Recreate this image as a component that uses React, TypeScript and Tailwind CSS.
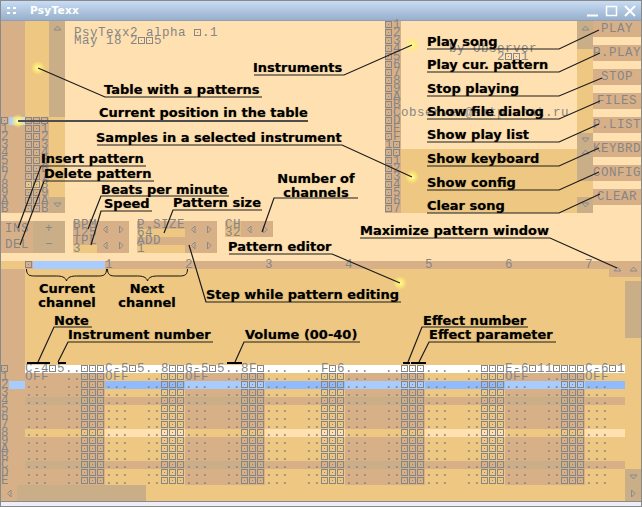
import React from 'react';

const MONO = "font-['Liberation_Mono',monospace] text-[12.5px] leading-[9px] tracking-[0.5px] text-[#868686] whitespace-pre";
// the tracker's zero is a box with a dot in it, the digit itself stays in the text
const ZERO = "w-[7px] h-[7px] mr-px shrink-0 box-border border border-[#868686] overflow-hidden text-[5px] leading-[5px] tracking-normal text-center text-transparent bg-[linear-gradient(#868686,#868686)] bg-[length:1px_1px] bg-center bg-no-repeat";
const NOTE = "absolute font-['DejaVu_Sans',sans-serif] font-bold text-[13px] leading-[14px] text-black whitespace-nowrap [text-shadow:0_0_1px_rgba(0,0,0,0.45)]";

function Txt({ children, className = '' }: { children: string; className?: string }) {
    return (
        <div className={`${MONO} h-2 flex ${className}`}>
            {children.split(/(0)/).filter(Boolean).map((part, i) =>
                part === '0'
                    ? <span key={i} className={ZERO}>0</span>
                    : <span key={i} className="shrink-0">{part}</span>
            )}
        </div>
    );
}

function Arrow({ dir, className = '' }: { dir: 'up' | 'down' | 'left' | 'right'; className?: string }) {
    const points = {
        up: '4.5,2 1,6 8,6',
        down: '1,2 8,2 4.5,6',
        left: '6,1 6,8 2.5,4.5',
        right: '2.5,1 2.5,8 6,4.5',
    }[dir];
    return (
        <svg width="9" height="9" viewBox="0 0 9 9" className={`shrink-0 ${className}`}>
            <polygon points={points} fill="none" stroke="#8a8a8a" strokeWidth="1" />
        </svg>
    );
}

const hexRows = '0123456789ABCDE'.split('');
const tableRows = '0123456789AB'.split('');
const instTop = ['01', '02', '03', '04', '05', '06', '07', '08', '09', '0A', '0B', '0C', '0D', '0E', '0F', '10'];
const instBottom = ['00', '01', '02', '03', '04', '05', '06', '07'];
const buttons = ['PLAY', 'P.PLAY', 'STOP', 'FILES', 'P.LIST', 'KEYBRD', 'CONFIG', 'CLEAR'];

const EMPTY = '...  ..000';
const channels = [
    { first: 'C-405..000', second: 'OFF  ..000', tan: true },
    { first: 'C-505..800', second: 'OFF  ..000', tan: false },
    { first: 'G-505..8F0', second: 'OFF  ..000', tan: true },
    { first: '...  ..F06', second: EMPTY, tan: false },
    { first: EMPTY, second: EMPTY, tan: true },
    { first: EMPTY, second: EMPTY, tan: false },
    { first: 'E-60110000', second: 'OFF  ..000', tan: true },
    { first: 'C-601', second: 'OFF', tan: false },
];

function rowBg(row: number, ch: number, tan: boolean) {
    if (row === 0) return 'bg-white';
    if (row === 2) {
        if (ch === 0) return 'bg-[#d8b088]';
        return tan ? 'bg-[#a8ccff]' : 'bg-[#90bcff]';
    }
    if (row === 4 || row === 12) return tan ? 'bg-[#c9ae88]' : 'bg-[#d8b088]';
    if (row === 8) return tan ? 'bg-[#eec882]' : 'bg-[#ffe0b0]';
    return tan ? 'bg-[#d8b088]' : 'bg-[#eec882]';
}

function TitleBar() {
    return (
        <div className="h-[21px] shrink-0 flex items-center border-t border-[#8a8a8a] border-b border-b-[#8f9fb4] bg-gradient-to-b from-[#c8dcf4] to-[#98b0cc]">
            <svg width="10" height="7" viewBox="0 0 10 7" className="ml-[6px]" fill="#fff">
                <rect x="0" y="0" width="3" height="2" />
                <rect x="6" y="0" width="3" height="2" />
                <rect x="0" y="5" width="3" height="2" />
                <rect x="6" y="5" width="3" height="2" />
            </svg>
            <span className="ml-[13px] font-['DejaVu_Sans',sans-serif] font-bold text-[10.5px] tracking-[0.3px] text-white">PsyTexx</span>
            <svg width="52" height="14" viewBox="0 0 52 14" className="ml-auto mr-[4px]" stroke="#fff" fill="none">
                <path d="M2 11.5h11" strokeWidth="2" />
                <rect x="21.5" y="2.5" width="10" height="9" strokeWidth="1.5" />
                <path d="M40 2l10 10M50 2L40 12" strokeWidth="2" />
            </svg>
        </div>
    );
}

function PatternTable() {
    return (
        <div className="w-16 flex shrink-0">
            <div className="w-6 bg-[#d8b088] pt-24">
                {tableRows.map((r, i) => (
                    <div key={r} className="flex h-2">
                        <Txt className="w-2">{r}</Txt>
                        {i === 0 && <div className="w-4 h-2 bg-gradient-to-r from-[#a8ccff] to-[#cfe0e0]" />}
                    </div>
                ))}
            </div>
            <div className="w-6 bg-[#eec882] pt-24">
                {tableRows.map((r, i) => (
                    <Txt key={r} className={i === 8 ? 'bg-[#eec882]' : 'bg-[#d8b088]'}>{`00${r}`}</Txt>
                ))}
            </div>
            <div className="w-4 flex flex-col bg-[#eec882]">
                <div className="h-24 bg-[#c9ae88] flex justify-center pt-[3px] items-start">
                    <Arrow dir="up" />
                </div>
                <div className="mt-auto h-4 bg-[#c9ae88] flex justify-center items-center">
                    <Arrow dir="down" />
                </div>
            </div>
        </div>
    );
}

function InstrumentList() {
    return (
        <>
            <div className="w-4 shrink-0 bg-[#d8b088]">
                {instTop.map((n, i) => <Txt key={i}>{n}</Txt>)}
                {instBottom.map((n, i) => <Txt key={i}>{n}</Txt>)}
            </div>
            <div className="w-[176px] shrink-0 flex flex-col">
                <div className="h-32 flex flex-col">
                    <Txt className="mt-6 pl-12">by Observer</Txt>
                    <Txt className="pl-24">2001</Txt>
                    <Txt className="mt-12">observer@smtp.chat.ru</Txt>
                </div>
                <div className="h-16 bg-[#eec882]" />
            </div>
            <div className="w-4 shrink-0 flex flex-col bg-[#eec882]">
                <div className="h-7 bg-[#c9ae88] flex justify-center items-start pt-[3px]"><Arrow dir="up" /></div>
                <div className="h-12 mt-[84px] bg-[#c9ae88] flex flex-col items-center pt-[3px]">
                    <Arrow dir="down" />
                    <Arrow dir="up" className="mt-[3px]" />
                </div>
                <div className="h-4 mt-auto bg-[#c9ae88] flex justify-center items-center"><Arrow dir="down" /></div>
            </div>
        </>
    );
}

function SideButtons() {
    return (
        <div className="w-12 shrink-0 flex flex-col gap-2">
            {buttons.map(b => (
                <div key={b} className="h-4 bg-[#d8b088] flex items-center justify-center">
                    <Txt>{b}</Txt>
                </div>
            ))}
        </div>
    );
}

function LeftRight() {
    return (
        <div className="flex h-2 items-center w-8">
            <Arrow dir="left" className="ml-[4px]" />
            <Arrow dir="right" className="ml-[7px]" />
        </div>
    );
}

function Controls() {
    return (
        <div className="h-8 shrink-0 flex gap-2 mt-2">
            <div className="w-16 flex">
                <div className="w-8 bg-[#d8b088] flex flex-col items-center gap-2 pt-1">
                    <Txt>INS</Txt>
                    <Txt>DEL</Txt>
                </div>
                <div className="w-8 bg-[#c9ae88] flex flex-col items-center gap-2 pt-1">
                    <Txt>+</Txt>
                    <Txt>{'\u2212'}</Txt>
                </div>
            </div>
            <div className="w-14 bg-[#d8b088] flex">
                <div className="w-6">
                    <Txt>BPM</Txt>
                    <Txt>125</Txt>
                    <Txt>TPL</Txt>
                    <Txt className="bg-[#eec882]">3</Txt>
                </div>
                <div className="w-8 flex flex-col gap-2 pt-1">
                    <LeftRight />
                    <LeftRight />
                </div>
            </div>
            <div className="w-20 bg-[#d8b088] flex">
                <div className="w-12">
                    <Txt>P.SIZE</Txt>
                    <Txt className="bg-[#eec882]">64</Txt>
                    <Txt>ADD</Txt>
                    <Txt className="bg-[#eec882]">1</Txt>
                </div>
                <div className="w-8 flex flex-col gap-2 pt-1">
                    <LeftRight />
                    <LeftRight />
                </div>
            </div>
            <div className="w-12 h-4 bg-[#d8b088] flex">
                <div className="w-4 bg-[#e4bc84]">
                    <Txt>CH</Txt>
                    <Txt>32</Txt>
                </div>
                <div className="w-8 pt-1"><LeftRight /></div>
            </div>
        </div>
    );
}

function ChannelHeader() {
    return (
        <div className="h-4 shrink-0 flex mt-2">
            <div className="w-[608px] shrink-0 flex flex-col bg-[#eec882]">
                <div className="h-2 flex">
                    <div className="w-6 shrink-0 bg-[#eec882]" />
                    <Txt className="w-2 shrink-0 bg-[#d8b088]">0</Txt>
                    <div className="w-[72px] shrink-0 bg-[#a8ccff]" />
                    <div className="flex-1 flex bg-[#d8b088]">
                        {['1', '2', '3', '4', '5', '6'].map(n => (
                            <Txt key={n} className="w-20 shrink-0">{n}</Txt>
                        ))}
                        <Txt className="w-6 shrink-0">7</Txt>
                    </div>
                </div>
                <div className="h-2 w-6 bg-[#d8b088]" />
            </div>
            <div className="w-8 bg-[#d8b088] flex items-center">
                <Arrow dir="up" className="ml-[4px]" />
                <Arrow dir="up" className="ml-[7px]" />
            </div>
        </div>
    );
}

function PatternEditor() {
    return (
        <div className="h-[224px] shrink-0 flex bg-[#eec882]">
            <div className="w-[624px] shrink-0 flex flex-col">
                <div className="flex h-[208px]">
                    <div className="w-6 shrink-0 bg-[#d8b088] pt-[88px]">
                        {hexRows.map((r, i) => (
                            <div key={r} className="flex h-2">
                                <Txt className="w-2">{r}</Txt>
                                {i === 2 && <div className="w-4 bg-[#a8ccff]" />}
                            </div>
                        ))}
                    </div>
                    {channels.map((c, ch) => (
                        <div key={ch} className={`${ch === 7 ? 'w-10' : 'w-20'} shrink-0 pt-[88px]`}>
                            {hexRows.map((_, row) => (
                                <Txt key={row} className={rowBg(row, ch, c.tan)}>
                                    {row === 0 ? c.first : row === 1 ? c.second : ch === 7 ? '...' : EMPTY}
                                </Txt>
                            ))}
                        </div>
                    ))}
                </div>
                <div className="flex h-4">
                    <div className="w-4 bg-[#d8b088] flex items-center justify-center"><Arrow dir="left" /></div>
                    <div className="w-[129px] bg-[#c9ae88]" />
                </div>
            </div>
            <div className="w-4 shrink-0 flex flex-col">
                <div className="h-[57px] mt-1 bg-[#c9ae88]" />
                <div className="h-8 mt-auto bg-[#c9ae88] flex flex-col items-center justify-around">
                    <Arrow dir="down" />
                    <Arrow dir="right" />
                </div>
            </div>
        </div>
    );
}

const notes = [
    { t: 'Table with a patterns', c: 'left-[103px] top-[83px]' },
    { t: 'Current position in the table', c: 'left-[98px] top-[106px]' },
    { t: 'Instruments', c: 'left-[252px] top-[61px]' },
    { t: 'Samples in a selected instrument', c: 'left-[95px] top-[131px]' },
    { t: 'Insert pattern', c: 'left-[40px] top-[152px]' },
    { t: 'Delete pattern', c: 'left-[43px] top-[167px]' },
    { t: 'Beats per minute', c: 'left-[100px] top-[183px]' },
    { t: 'Speed', c: 'left-[103px] top-[197px]' },
    { t: 'Pattern size', c: 'left-[172px] top-[196px]' },
    { t: 'Pattern editor', c: 'left-[227px] top-[240px]' },
    { t: 'Step while pattern editing', c: 'left-[205px] top-[288px]' },
    { t: 'Maximize pattern window', c: 'left-[359px] top-[224px]' },
    { t: 'Play song', c: 'left-[426px] top-[35px]' },
    { t: 'Play cur. pattern', c: 'left-[426px] top-[58px]' },
    { t: 'Stop playing', c: 'left-[426px] top-[82px]' },
    { t: 'Show file dialog', c: 'left-[426px] top-[105px]' },
    { t: 'Show play list', c: 'left-[426px] top-[128px]' },
    { t: 'Show keyboard', c: 'left-[426px] top-[152px]' },
    { t: 'Show config', c: 'left-[426px] top-[176px]' },
    { t: 'Clear song', c: 'left-[426px] top-[199px]' },
    { t: 'Note', c: 'left-[53px] top-[314px]' },
    { t: 'Instrument number', c: 'left-[67px] top-[328px]' },
    { t: 'Volume (00-40)', c: 'left-[244px] top-[328px]' },
    { t: 'Effect number', c: 'left-[422px] top-[314px]' },
    { t: 'Effect parameter', c: 'left-[428px] top-[328px]' },
];

const leaders = [
    '37,68 104,97 261,97',
    '253,75 343,75 411,45',
    '96,145 341,145 411,177',
    '17,228 40,166 145,166',
    '19,245 43,181 153,181',
    '87,229 100,196 228,196',
    '90,245 100,211 151,211',
    '163,233 172,210 261,210',
    '261,232 273,198 357,198',
    '228,254 331,254 399,283',
    '188,245 205,302 400,302',
    '359,238 549,238 616,268',
    '426,49 558,49 598,30',
    '426,72 558,72 599,53',
    '426,96 558,96 601,78',
    '426,119 558,119 599,101',
    '426,142 558,142 598,124',
    '426,166 558,166 598,148',
    '426,190 558,190 598,172',
    '426,213 558,213 599,194',
    '37,362 53,327 91,327',
    '57,362 67,342 212,342',
    '234,362 243,342 359,342',
    '407,362 421,327 527,327',
    '418,362 428,342 555,342',
];

const bars = [
    [26, 49],
    [57, 65],
    [226, 241],
    [402, 409],
    [410, 425],
];

const glows = [
    [37, 68],
    [17, 121],
    [411, 45],
    [411, 177],
    [399, 283],
];

function Notes() {
    return (
        <>
            <svg width="642" height="507" className="absolute inset-0 pointer-events-none" fill="none">
                <defs>
                    <radialGradient id="glow">
                        <stop offset="0" stopColor="#fffbe0" />
                        <stop offset="0.45" stopColor="#fff06a" stopOpacity="0.85" />
                        <stop offset="1" stopColor="#fff06a" stopOpacity="0" />
                    </radialGradient>
                </defs>
                {glows.map(([x, y]) => (
                    <circle key={x + y} cx={x} cy={y} r="7" fill="url(#glow)" />
                ))}
                {leaders.map(p => (
                    <polyline key={p} points={p} stroke="#1c1c1c" strokeWidth="1.2" />
                ))}
                <path d="M17 121H307" stroke="#4d4d4d" strokeWidth="2" />
                {bars.map(([a, b]) => (
                    <path key={a} d={`M${a} 363H${b}`} stroke="#000" strokeWidth="2" />
                ))}
                <path d="M25.5 269c0 6 3 7 8 7h22c5 0 9 1 10 5 1-4 5-5 10-5h22c5 0 8-1 8-7" stroke="#111" strokeWidth="1" />
                <path d="M106.5 269c0 6 3 7 8 7h22c5 0 9 1 10 5 1-4 5-5 10-5h22c5 0 8-1 8-7" stroke="#111" strokeWidth="1" />
            </svg>
            {notes.map(n => (
                <div key={n.t} className={`${NOTE} ${n.c}`}>{n.t}</div>
            ))}
            <div className={`${NOTE} left-[273px] top-[172px] w-[84px] text-center`}>Number of<br />channels</div>
            <div className={`${NOTE} left-[26px] top-[282px] w-20 text-center`}>Current<br />channel</div>
            <div className={`${NOTE} left-[106px] top-[282px] w-20 text-center`}>Next<br />channel</div>
        </>
    );
}

export default function App() {
    return (
        <div className="relative w-[642px] h-[507px] overflow-hidden flex flex-col bg-[#ffe0b0] border-x border-x-[#8a8a8a]">
            <TitleBar />
            <div className="flex h-48 shrink-0">
                <PatternTable />
                <div className="w-80 shrink-0 pl-[9px] pt-2">
                    <Txt>PsyTexx2 alpha 0.1</Txt>
                    <Txt>May 18 2005</Txt>
                </div>
                <InstrumentList />
                <SideButtons />
            </div>
            <Controls />
            <ChannelHeader />
            <PatternEditor />
            <div className="h-[6px] shrink-0 border-y border-[#8a8a8a] bg-[#eeeef8]" />
            <Notes />
        </div>
    );
}
